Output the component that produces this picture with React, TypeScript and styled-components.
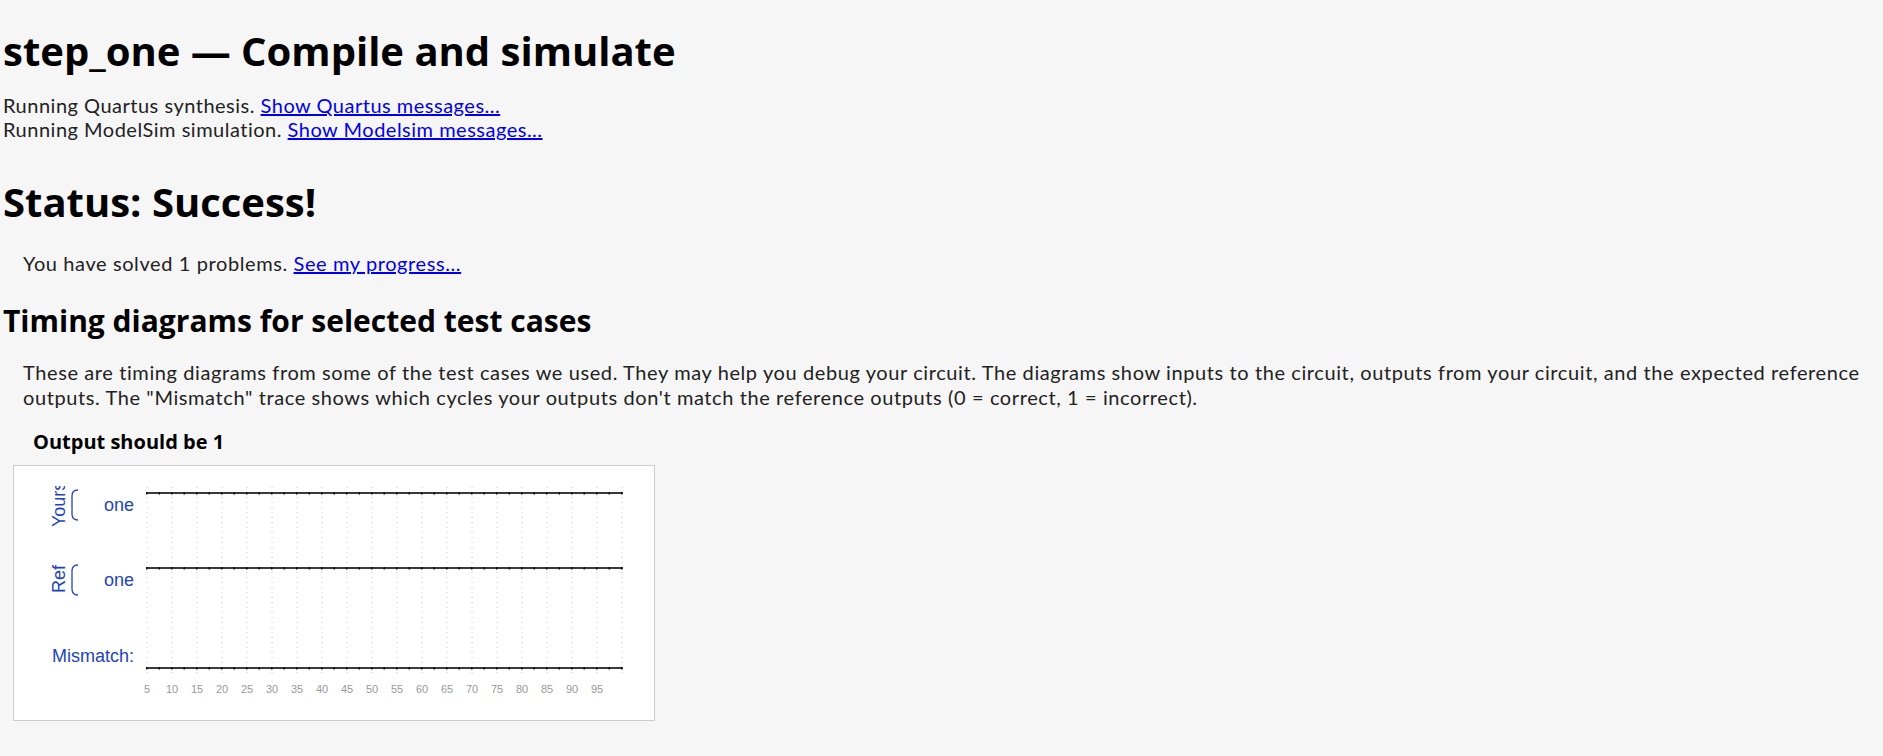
import styled, { createGlobalStyle } from 'styled-components';

const GlobalStyle = createGlobalStyle`
  body {
    margin: 0;
    background: #f6f6f6;
    color: #222;
    font-family: Lato, "Open Sans", sans-serif;
    font-weight: 400;
  }
`;

const Page = styled.div`
  padding: 0 3px;
  overflow: hidden;
`;

const Title = styled.h1`
  font-family: "Open Sans", sans-serif;
  font-weight: 700;
  font-size: 40px;
  line-height: 48px;
  color: #000;
  margin: 27px 0 18px;
`;

const Log = styled.div`
  font-size: 20px;
  line-height: 24px;
  letter-spacing: 0.5px;
`;

const Link = styled.a`
  color: #0000ee;
  text-decoration: underline;
`;

const Status = styled.h2`
  font-family: "Open Sans", sans-serif;
  font-weight: 700;
  font-size: 40px;
  line-height: 48px;
  color: #000;
  margin: 37px 0 25px;
`;

const Indented = styled.p`
  margin: 0;
  padding-left: 20px;
  font-size: 20px;
  line-height: 25px;
  letter-spacing: 0.6px;
`;

const Section = styled.h3`
  font-family: "Open Sans", sans-serif;
  font-weight: 700;
  font-size: 30px;
  line-height: 36px;
  color: #000;
  margin: 27px 0 21px;
`;

const CaseTitle = styled.h4`
  font-family: "Open Sans", sans-serif;
  font-weight: 700;
  font-size: 20px;
  line-height: 24px;
  color: #000;
  margin: 20px 0 11px 30px;
`;

const DiagramBox = styled.div`
  width: 640px;
  height: 254px;
  margin-left: 10px;
  background: #fff;
  border: 1px solid #ccc;
`;

const Wave = styled.svg`
  display: block;
  font-family: "Liberation Sans", Arial, sans-serif;
`;

const BLUE = '#2244bb';
const X0 = 132;
const STEP = 25;
const CYCLES = 19;
const X1 = X0 + STEP * CYCLES + 2;

type Trace = { group?: string; groupBottom?: number; name: string; y: number; labelY: number };

const traces: Trace[] = [
  { group: 'Yours', groupBottom: 61, name: 'one', y: 27, labelY: 45 },
  { group: 'Ref', groupBottom: 127, name: 'one', y: 102, labelY: 120 },
  { name: 'Mismatch:', y: 202, labelY: 196 },
];

const Bracket = ({ top }: { top: number }) => (
  <path
    d={`M64 ${top} Q58 ${top} 58 ${top + 6} L58 ${top + 24} Q58 ${top + 30} 64 ${top + 30}`}
    fill="none"
    stroke={BLUE}
    strokeWidth={1.3}
  />
);

const TimingDiagram = () => {
  const cols = Array.from({ length: CYCLES + 1 }, (_, i) => X0 + 1 + i * STEP);
  const ticks = Array.from({ length: CYCLES * 2 + 1 }, (_, i) => X0 + i * (STEP / 2));
  return (
    <Wave width={640} height={254} viewBox="0 0 640 254">
      <defs>
        <clipPath id="lanes">
          <rect x={0} y={20} width={640} height={234} />
        </clipPath>
      </defs>
      {cols.map((x) => (
        <line key={x} x1={x} y1={21} x2={x} y2={207} stroke="#c8c8c8" strokeDasharray="1 4" />
      ))}
      {traces.map((t) => (
        <g key={t.y}>
          {t.group && (
            <g clipPath="url(#lanes)">
              <text
                transform={`translate(51 ${t.groupBottom}) rotate(-90)`}
                fontSize={18}
                fill={BLUE}
              >
                {t.group}
              </text>
              <Bracket top={t.y - 3} />
            </g>
          )}
          <text x={120} y={t.labelY} fontSize={18} fill={BLUE} textAnchor="end">
            {t.name}
          </text>
          <line x1={X0} y1={t.y} x2={X1} y2={t.y} stroke="#3a3a3a" strokeWidth={2} />
          {ticks.map((x) => (
            <rect key={x} x={x} y={t.y - 1} width={1.5} height={2.5} fill="#111" />
          ))}
        </g>
      ))}
      {cols.slice(0, CYCLES).map((x, i) => (
        <text key={x} x={x} y={227} fontSize={11} fill="#999" textAnchor="middle">
          {(i + 1) * 5}
        </text>
      ))}
    </Wave>
  );
};

export default function App() {
  return (
    <Page>
      <GlobalStyle />
      <Title>step_one — Compile and simulate</Title>
      <Log>
        Running Quartus synthesis. <Link href="#">Show Quartus messages...</Link>
      </Log>
      <Log>
        Running ModelSim simulation. <Link href="#">Show Modelsim messages...</Link>
      </Log>
      <Status>Status: Success!</Status>
      <Indented>
        You have solved 1 problems. <Link href="#">See my progress...</Link>
      </Indented>
      <Section>Timing diagrams for selected test cases</Section>
      <Indented>
        These are timing diagrams from some of the test cases we used. They may help you debug your
        circuit. The diagrams show inputs to the circuit, outputs from your circuit, and the expected
        reference outputs. The "Mismatch" trace shows which cycles your outputs don't match the
        reference outputs (0 = correct, 1 = incorrect).
      </Indented>
      <CaseTitle>Output should be 1</CaseTitle>
      <DiagramBox>
        <TimingDiagram />
      </DiagramBox>
    </Page>
  );
}
